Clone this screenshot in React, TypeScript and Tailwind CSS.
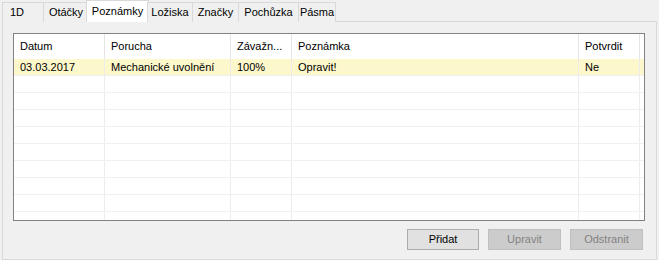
import React from 'react';

const tabs = [
  { label: '1D', w: 'w-[41px] justify-start pl-[7px]' },
  { label: 'Otáčky', w: 'w-[45px] justify-center' },
  { label: 'Poznámky', w: 'w-[63px] justify-center', active: true },
  { label: 'Ložiska', w: 'w-[45px] justify-center' },
  { label: 'Značky', w: 'w-[46px] justify-center' },
  { label: 'Pochůzka', w: 'w-[60px] justify-center' },
  { label: 'Pásma', w: 'w-[38px] justify-center' },
];

const headers = ['Datum', 'Porucha', 'Závažn...', 'Poznámka', 'Potvrdit'];
const firstRow = ['03.03.2017', 'Mechanické uvolnění', '100%', 'Opravit!', 'Ne'];

const Row: React.FC<{ cells: string[]; highlight?: boolean }> = ({ cells, highlight }) => (
  <div
    className={`grid grid-cols-[91px_126px_61px_287px_61px_1fr] h-[17px] border-b border-[#f0f0f0] ${
      highlight ? 'bg-[#fdf8cb]' : ''
    }`}
  >
    {cells.map((c, i) => (
      <div
        key={i}
        className={`pl-[6px] leading-[16px] whitespace-nowrap overflow-hidden ${
          i < 5 ? 'border-r border-[#ececec]' : ''
        }`}
      >
        {c}
      </div>
    ))}
  </div>
);

export default function App() {
  const emptyRows = Array.from({ length: 9 });

  return (
    <div
      className="w-[659px] h-[260px] bg-[#f0f0f0] text-[11px] text-black flex flex-col overflow-hidden"
      style={{ fontFamily: '"Liberation Sans", Arial, sans-serif' }}
    >
      {/* Tabs */}
      <div className="flex items-end h-[22px] pl-[2px] relative z-10">
        {tabs.map((t) =>
          t.active ? (
            <div
              key={t.label}
              className={`${t.w} h-[22px] -mx-[2px] bg-white border border-b-0 border-[#d9d9d9] flex items-center pb-[1px]`}
            >
              {t.label}
            </div>
          ) : (
            <div
              key={t.label}
              className={`${t.w} h-[20px] bg-[#f0f0f0] border border-r-0 last:border-r border-[#d9d9d9] flex items-center border-b-0`}
            >
              {t.label}
            </div>
          )
        )}
      </div>

      {/* Tab pane */}
      <div className="flex-1 mx-[2px] -mt-px border border-[#d9d9d9] pt-[11px] pl-[10px]">
        <div className="w-[632px] h-[188px] border border-[#828282] bg-white overflow-hidden">
          <div className="grid grid-cols-[91px_126px_61px_287px_61px_1fr] h-[25px]">
            {headers.map((h) => (
              <div key={h} className="pl-[6px] border-r border-[#e5e5e5] flex items-center whitespace-nowrap">
                {h}
              </div>
            ))}
            <div />
          </div>
          <Row cells={[...firstRow, '']} highlight />
          {emptyRows.map((_, i) => (
            <Row key={i} cells={['', '', '', '', '', '']} />
          ))}
        </div>

        <div className="flex justify-end gap-[9px] w-[630px] mt-[8px]">
          <button className="w-[72px] h-[21px] bg-[#e1e1e1] border border-[#adadad] text-black">Přidat</button>
          <button className="w-[73px] h-[21px] bg-[#cccccc] border border-[#bfbfbf] text-[#838383]">Upravit</button>
          <button className="w-[73px] h-[21px] bg-[#cccccc] border border-[#bfbfbf] text-[#838383]">Odstranit</button>
        </div>
      </div>
    </div>
  );
}
